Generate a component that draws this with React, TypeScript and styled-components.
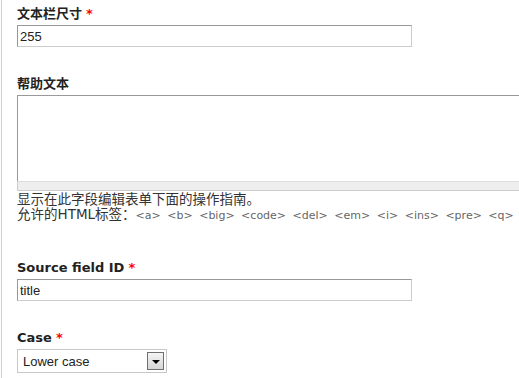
import React from 'react';
import styled, { createGlobalStyle } from 'styled-components';

const GlobalStyle = createGlobalStyle`
  html, body {
    margin: 0;
    padding: 0;
    background: #fff;
    overflow: hidden;
  }
`;

const Page = styled.div`
  min-height: 378px;
  margin-left: 1px;
  border-left: 1px solid #cfcfcf;
  padding: 5px 0 0 15px;
  font-family: 'DejaVu Sans', 'Noto Sans CJK SC', sans-serif;
  color: #333;
`;

const Field = styled.div<{ $gap: number }>`
  margin-top: ${(p) => p.$gap}px;
`;

const Label = styled.label`
  display: block;
  height: 18px;
  line-height: 18px;
  margin-bottom: 2px;
  font-size: 13px;
  font-weight: 700;
  color: #222;
  white-space: nowrap;
`;

const Required = styled.span`
  color: #f00;
  margin-left: 4px;
`;

const TextInput = styled.input`
  display: block;
  box-sizing: border-box;
  width: 395px;
  height: 22px;
  margin: 0;
  padding: 0 2px;
  border: 1px solid #ccc;
  border-top-color: #999;
  border-left-color: #999;
  font-family: 'Liberation Sans', Arial, sans-serif;
  font-size: 13px;
  color: #222;
  outline: none;
`;

const TextArea = styled.textarea`
  display: block;
  box-sizing: border-box;
  width: 540px;
  height: 86px;
  margin: 0;
  padding: 2px;
  border: 1px solid #ccc;
  border-top-color: #999;
  border-left-color: #999;
  border-bottom: none;
  resize: none;
  outline: none;
`;

const Grippie = styled.div`
  box-sizing: border-box;
  width: 540px;
  height: 10px;
  background: #eee;
  border: 1px solid #ccc;
  border-top-color: #ddd;
`;

const Description = styled.div`
  padding-top: 1px;
  font-size: 13.5px;
  line-height: 15px;
  color: #333;
  white-space: nowrap;
  overflow: hidden;
`;

const Tags = styled.span`
  font-size: 11px;
  color: #666;
  word-spacing: 3px;
`;

const SelectBox = styled.div`
  box-sizing: border-box;
  width: 150px;
  height: 24px;
  border: 1px solid #c8c8c8;
  display: flex;
  align-items: center;
  justify-content: space-between;
  padding: 0 2px 0 5px;
  font-family: 'Liberation Sans', Arial, sans-serif;
  font-size: 13px;
  color: #222;
`;

const DropButton = styled.span`
  box-sizing: border-box;
  width: 17px;
  height: 18px;
  border: 1px solid #6f6f6f;
  background: linear-gradient(#f4f4f4, #d6d6d6);
  display: flex;
  align-items: center;
  justify-content: center;
  padding-top: 2px;
`;

const Arrow = styled.span`
  width: 0;
  height: 0;
  border-left: 4px solid transparent;
  border-right: 4px solid transparent;
  border-top: 4px solid #000;
`;

const App = () => {
  const tags = ['<a>', '<b>', '<big>', '<code>', '<del>', '<em>', '<i>', '<ins>', '<pre>', '<q>', '<small>', '<span>'];

  return (
    <>
      <GlobalStyle />
      <Page>
        <Field $gap={0}>
          <Label>
            文本栏尺寸<Required>*</Required>
          </Label>
          <TextInput defaultValue="255" />
        </Field>

        <Field $gap={28}>
          <Label>帮助文本</Label>
          <TextArea />
          <Grippie />
          <Description>
            显示在此字段编辑表单下面的操作指南。
            <br />
            允许的HTML标签：<Tags>{tags.join(' ')}</Tags>
          </Description>
        </Field>

        <Field $gap={36}>
          <Label>
            Source field ID<Required>*</Required>
          </Label>
          <TextInput defaultValue="title" />
        </Field>

        <Field $gap={28}>
          <Label>
            Case<Required>*</Required>
          </Label>
          <SelectBox>
            Lower case
            <DropButton>
              <Arrow />
            </DropButton>
          </SelectBox>
        </Field>
      </Page>
    </>
  );
};

export default App;
